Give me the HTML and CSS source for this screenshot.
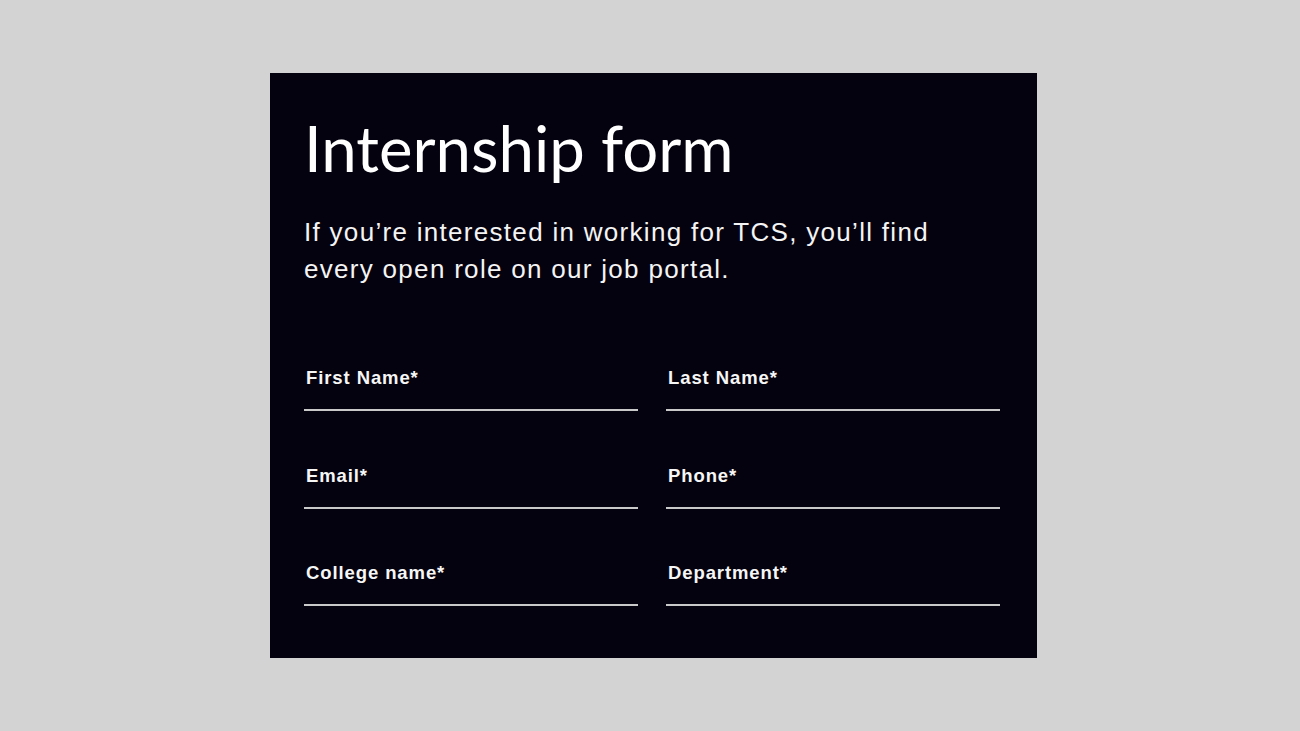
FILE: index.html
```html
<!DOCTYPE html>
<html lang="en">
<head>
    <meta charset="UTF-8">
    <meta name="viewport" content="width=device-width, initial-scale=1.0">
    <title>Internship form</title>
    <link rel="stylesheet" href="styles.css">
</head>
<body>
    <div class="panel">
        <h1 class="title">Internship form</h1>
        <p class="intro">If you’re interested in working for TCS, you’ll find every open role on our job portal.</p>

        <form class="fields">
            <label class="field"><span>First Name*</span></label>
            <label class="field"><span>Last Name*</span></label>
            <label class="field"><span>Email*</span></label>
            <label class="field"><span>Phone*</span></label>
            <label class="field"><span>College name*</span></label>
            <label class="field"><span>Department*</span></label>
        </form>
    </div>
</body>
</html>
```

FILE: styles.css
```css
* {
    margin: 0;
    padding: 0;
    box-sizing: border-box;
}

body {
    background: #d3d3d3;
    font-family: "Liberation Sans", Arial, sans-serif;
    color: #fff;
}

.panel {
    width: 767px;
    height: 585px;
    margin: 73px 0 0 270px;
    padding: 40px 37px 0 34px;
    background: #04020e;
}

.title {
    font-family: Lato, "Open Sans", sans-serif;
    font-weight: 400;
    font-size: 63.5px;
    line-height: 70px;
}

.intro {
    margin-top: 31px;
    width: 650px;
    font-size: 26px;
    line-height: 37px;
    letter-spacing: 1.3px;
    color: #f4f4f4;
}

.fields {
    display: grid;
    grid-template-columns: 334px 334px;
    column-gap: 28px;
    margin-top: 71px;
}

.field {
    display: block;
    height: 97.5px;
}

.field span {
    display: block;
    height: 52px;
    padding-left: 2px;
    font-size: 18.5px;
    font-weight: bold;
    line-height: 38px;
    letter-spacing: 0.9px;
    color: #f6f6f6;
    border-bottom: 2px solid #c9c9c9;
}
```
